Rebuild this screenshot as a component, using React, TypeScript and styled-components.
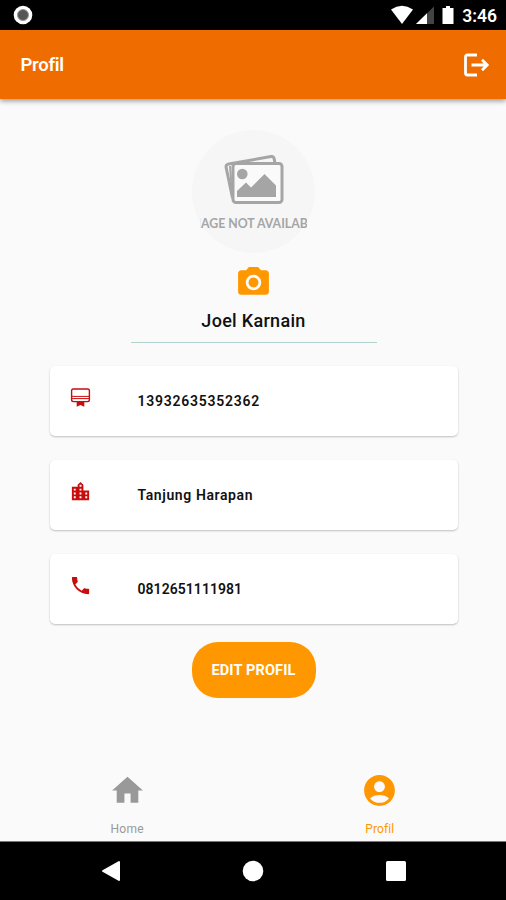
import React from "react";
import styled, { createGlobalStyle } from "styled-components";
import {
  MdAccountCircle,
  MdHome,
  MdLocationCity,
  MdPhone,
  MdPhotoCamera,
} from "react-icons/md";

const GlobalStyle = createGlobalStyle`
  * { box-sizing: border-box; }
  body { margin: 0; background: #fafafa; font-family: Roboto, sans-serif; }
  svg { display: block; flex: none; }
`;

const Screen = styled.div`
  width: 506px;
  height: 900px;
  display: flex;
  flex-direction: column;
  overflow: hidden;
  background: #fafafa;
`;

const StatusBar = styled.div`
  height: 30px;
  flex: none;
  display: flex;
  align-items: center;
  justify-content: space-between;
  padding: 0 9px 0 13px;
  background: #000;
  color: #fff;
`;

const StatusIcons = styled.div`
  display: flex;
  align-items: center;
`;

const Clock = styled.span`
  margin-left: 7px;
  padding-top: 2px;
  font-size: 17.5px;
  font-weight: 600;
  line-height: 28px;
`;

const AppBar = styled.header`
  height: 69px;
  flex: none;
  display: flex;
  align-items: center;
  justify-content: space-between;
  padding: 0 16px 0 20.5px;
  background: #ef6c00;
  color: #fff;
  box-shadow: 0 2px 5px rgba(0, 0, 0, 0.4);
`;

const Title = styled.h1`
  margin: 0;
  font-size: 18.5px;
  font-weight: 600;
  letter-spacing: -0.25px;
`;

const Content = styled.main`
  flex: 1;
  display: flex;
  flex-direction: column;
  align-items: center;
  padding: 31px 0 0 1px;
`;

const Avatar = styled.div`
  width: 123px;
  height: 123px;
  display: flex;
  flex-direction: column;
  align-items: center;
  padding-top: 24px;
  border-radius: 50%;
  background: #f6f6f6;
  color: #a5a5a5;
`;

const AvatarCaption = styled.div`
  width: 107px;
  margin-top: 9px;
  display: flex;
  justify-content: center;
  overflow: hidden;
  white-space: nowrap;
  font-family: Lato, sans-serif;
  font-size: 12.3px;
  font-weight: 700;
  line-height: 18px;
`;

const CameraButton = styled.div`
  margin-top: 11px;
  color: #ff9800;
`;

const Name = styled.div`
  width: 246px;
  height: 42px;
  padding-top: 8px;
  border-bottom: 1px solid #b2d0cc;
  text-align: center;
  font-size: 18px;
  font-weight: 500;
  line-height: 24px;
  letter-spacing: 0.3px;
  color: #111;
`;

const CardList = styled.div`
  width: 408px;
  margin-top: 23px;
  display: flex;
  flex-direction: column;
  gap: 24px;
`;

const Card = styled.div`
  height: 70px;
  display: flex;
  align-items: center;
  padding-left: 19px;
  border-radius: 5px;
  background: #fff;
  box-shadow: 0 1px 2px rgba(0, 0, 0, 0.24);
`;

const CardIcon = styled.div`
  width: 69px;
  padding-bottom: 7px;
  color: #c70d0d;
`;

const CardText = styled.span<{ $spacing: number }>`
  padding-bottom: 1px;
  font-size: 14px;
  font-weight: 600;
  line-height: 20px;
  letter-spacing: ${(p) => p.$spacing}px;
  color: #111;
`;

const EditButton = styled.button`
  width: 124px;
  height: 56px;
  margin-top: 18px;
  padding: 0;
  border: 0;
  border-radius: 26px;
  background: #ff9800;
  color: #fff;
  font-family: Roboto, sans-serif;
  font-size: 14.5px;
  font-weight: 700;
  letter-spacing: 0.15px;
`;

const TabBar = styled.nav`
  height: 76px;
  flex: none;
  display: grid;
  grid-template-columns: 1fr 1fr;
  padding-left: 1px;
`;

const Tab = styled.div<{ $active?: boolean }>`
  display: flex;
  flex-direction: column;
  align-items: center;
  padding-top: 7px;
  color: ${(p) => (p.$active ? "#ff9800" : "#999")};
`;

const TabLabel = styled.span<{ $active?: boolean }>`
  margin-top: 12px;
  font-size: 12px;
  line-height: 16px;
  letter-spacing: ${(p) => (p.$active ? 0.1 : 0.3)}px;
`;

const SystemNav = styled.div`
  height: 59px;
  flex: none;
  display: grid;
  grid-template-columns: 40px repeat(3, 142.3px) 1fr;
  align-items: center;
  justify-items: center;
  border-top: 1px solid #777;
  background: #000;

  & > :first-child {
    grid-column: 2;
  }
`;

const RecordIcon = () => (
  <svg width="20" height="20" viewBox="0 0 20 20">
    <circle cx="10" cy="10" r="9.3" fill="#fff" />
    <circle cx="10" cy="10" r="5.5" fill="#555" stroke="#999" strokeWidth="1" />
  </svg>
);

const SignalIcons = () => (
  <svg width="64" height="20" viewBox="0 0 64 20">
    <path d="M0 4.5Q11 -2.8 22 4.5L11 19Z" fill="#fff" />
    <path d="M43 1.5V19H25Z" fill="#444" />
    <path d="M36 8.3V19H25Z" fill="#fff" />
    <path d="M55 1h4v2h3.5v16H51.5V3h3.5Z" fill="#fff" />
  </svg>
);

const LogoutIcon = () => (
  <svg width="28" height="26" viewBox="0 0 28 26" fill="none" stroke="#fff" strokeWidth="2.8">
    <path d="M15 3H5.5Q3.5 3 3.5 5v16Q3.5 23 5.5 23H15" />
    <path d="M9.5 13h16M20 7.8 25.2 13 20 18.2" />
  </svg>
);

const MembershipIcon = () => (
  <svg width="23" height="23" viewBox="0 0 23 23">
    <rect x="2.6" y="3" width="17.8" height="12.6" rx="1.8" fill="none" stroke="currentColor" strokeWidth="1.4" />
    <path d="M3 10.4h17M3 12.6h17" stroke="currentColor" strokeWidth="1" />
    <path d="M7.7 15.6h7.6v5.2l-3.8-1.7-3.8 1.7Z" fill="currentColor" />
  </svg>
);

const PhotosIcon = () => (
  <svg width="60" height="52" viewBox="0 0 60 52">
    <g fill="none" stroke="currentColor" strokeWidth="3" strokeLinejoin="round">
      <path d="M8.5 44 2.2 13.8Q1.5 10.5 4.8 9.9L47 2.6Q49.7 2.2 50.2 5L51 9" />
      <path d="M6 12 8.5 44" strokeWidth="2" />
      <rect x="9" y="9.5" width="49" height="39" rx="3" fill="#fafafa" />
    </g>
    <circle cx="18.3" cy="20" r="5.3" fill="currentColor" />
    <path d="M13 43v-6l9-8.5 5 5L40.5 20 52 31.5V43Z" fill="currentColor" />
  </svg>
);

const fields = [
  { text: "13932635352362", icon: <MembershipIcon />, spacing: 0.75 },
  { text: "Tanjung Harapan", icon: <MdLocationCity size={23} />, spacing: 0.6 },
  { text: "0812651111981", icon: <MdPhone size={23} />, spacing: 0.05 },
];

export default function App() {
  return (
    <Screen>
      <GlobalStyle />
      <StatusBar>
        <RecordIcon />
        <StatusIcons>
          <SignalIcons />
          <Clock>3:46</Clock>
        </StatusIcons>
      </StatusBar>
      <AppBar>
        <Title>Profil</Title>
        <LogoutIcon />
      </AppBar>
      <Content>
        <Avatar>
          <PhotosIcon />
          <AvatarCaption>
            <span>IMAGE NOT AVAILABLE</span>
          </AvatarCaption>
        </Avatar>
        <CameraButton>
          <MdPhotoCamera size={37} />
        </CameraButton>
        <Name>Joel Karnain</Name>
        <CardList>
          {fields.map((field) => (
            <Card key={field.text}>
              <CardIcon>{field.icon}</CardIcon>
              <CardText $spacing={field.spacing}>{field.text}</CardText>
            </Card>
          ))}
        </CardList>
        <EditButton>EDIT PROFIL</EditButton>
      </Content>
      <TabBar>
        <Tab>
          <MdHome size={37} />
          <TabLabel>Home</TabLabel>
        </Tab>
        <Tab $active>
          <MdAccountCircle size={37} />
          <TabLabel $active>Profil</TabLabel>
        </Tab>
      </TabBar>
      <SystemNav>
        <svg width="20" height="22" viewBox="0 0 20 22">
          <path d="M18 2v18L2 11Z" fill="#fff" stroke="#fff" strokeWidth="2" strokeLinejoin="round" />
        </svg>
        <svg width="22" height="22" viewBox="0 0 22 22">
          <circle cx="11" cy="11" r="10.3" fill="#fff" />
        </svg>
        <svg width="20" height="20" viewBox="0 0 20 20">
          <rect width="20" height="20" rx="1.5" fill="#fff" />
        </svg>
      </SystemNav>
    </Screen>
  );
}
